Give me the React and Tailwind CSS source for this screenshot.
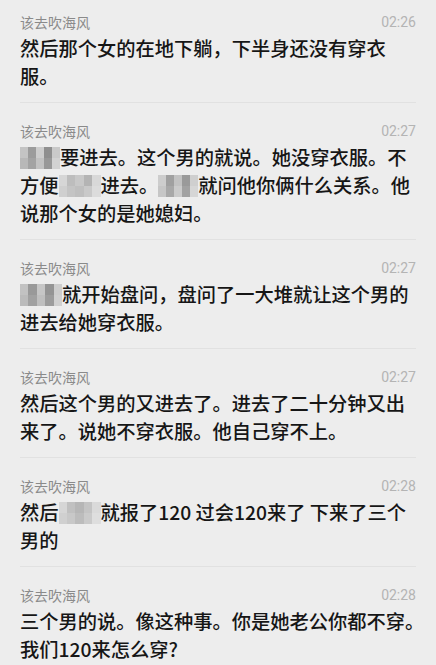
import React from "react";

function Mosaic({ width, top, bottom }) {
  return (
    <span
      className="inline-flex h-[22px] flex-col overflow-hidden align-top mt-[4px] blur-[0.5px]"
      style={{ width }}
    >
      {[top, bottom].map((fila, r) => (
        <span key={r} className="flex flex-1">
          {fila.map((c, i) => (
            <span key={i} className="h-full flex-1" style={{ background: c }} />
          ))}
        </span>
      ))}
    </span>
  );
}

const mensajes = [
  {
    hora: "02:26",
    lineas: [["然后那个女的在地下躺，下半身还没有穿衣"], ["服。"]],
  },
  {
    hora: "02:27",
    lineas: [
      [
        <Mosaic
          key="m"
          width={40}
          top={["#c4c4c4", "#9c9c9c", "#cdcdcd", "#8f8f8f", "#c9c9c9"]}
          bottom={["#b8b8b8", "#a3a3a3", "#c2c2c2", "#989898", "#d2d2d2"]}
        />,
        "要进去。这个男的就说。她没穿衣服。不",
      ],
      [
        "方便",
        <Mosaic
          key="m1"
          width={42}
          top={["#d6d6d6", "#bdbdbd", "#c8c8c8", "#b4b4b4", "#d8d8d8"]}
          bottom={["#cfcfcf", "#c4c4c4", "#bfbfbf", "#c9c9c9", "#dcdcdc"]}
        />,
        "进去。",
        <Mosaic
          key="m2"
          width={40}
          top={["#cdcdcd", "#a0a0a0", "#c2c2c2", "#9a9a9a", "#cfcfcf"]}
          bottom={["#c6c6c6", "#a8a8a8", "#cbcbcb", "#a2a2a2", "#d6d6d6"]}
        />,
        "就问他你俩什么关系。他",
      ],
      ["说那个女的是她媳妇。"],
    ],
  },
  {
    hora: "02:27",
    lineas: [
      [
        <Mosaic
          key="m"
          width={42}
          top={["#c2c2c2", "#999999", "#c6c6c6", "#949494", "#cdcdcd"]}
          bottom={["#bbbbbb", "#a1a1a1", "#bfbfbf", "#9c9c9c", "#d0d0d0"]}
        />,
        "就开始盘问，盘问了一大堆就让这个男的",
      ],
      ["进去给她穿衣服。"],
    ],
  },
  {
    hora: "02:27",
    lineas: [["然后这个男的又进去了。进去了二十分钟又出"], ["来了。说她不穿衣服。他自己穿不上。"]],
  },
  {
    hora: "02:28",
    lineas: [
      [
        "然后",
        <Mosaic
          key="m"
          width={42}
          top={["#d6d6d6", "#c0c0c0", "#b6b6b6", "#c4c4c4", "#dadada"]}
          bottom={["#d0d0d0", "#c8c8c8", "#bcbcbc", "#cacaca", "#dedede"]}
        />,
        "就报了120 过会120来了 下来了三个",
      ],
      ["男的"],
    ],
  },
  {
    hora: "02:28",
    lineas: [["三个男的说。像这种事。你是她老公你都不穿。"], ["我们120来怎么穿?"]],
  },
];

export default function App() {
  return (
    <div
      className="min-h-screen bg-[#ededed] px-5"
      style={{ fontFamily: '"Noto Sans CJK SC", "Noto Sans", sans-serif' }}
    >
      {mensajes.map((m, i) => (
        <div
          key={i}
          className={`pb-3 ${i === 0 ? "pt-[12px]" : "pt-[18px]"} ${
            i < mensajes.length - 1 ? "border-b border-[#e1e1e1]" : ""
          }`}
        >
          <div className="flex h-5 items-center justify-between text-[14px] leading-5">
            <span className="text-[#8a8a8a]">该去吹海风</span>
            <span className="text-[#b4b4b4]" style={{ fontFamily: "Roboto, sans-serif" }}>
              {m.hora}
            </span>
          </div>
          <div className="mt-[2px] text-[19.25px] font-medium leading-[28px] text-[#161616]">
            {m.lineas.map((l, j) => (
              <div key={j} className="h-[28px] whitespace-nowrap">
                {l}
              </div>
            ))}
          </div>
        </div>
      ))}
    </div>
  );
}
